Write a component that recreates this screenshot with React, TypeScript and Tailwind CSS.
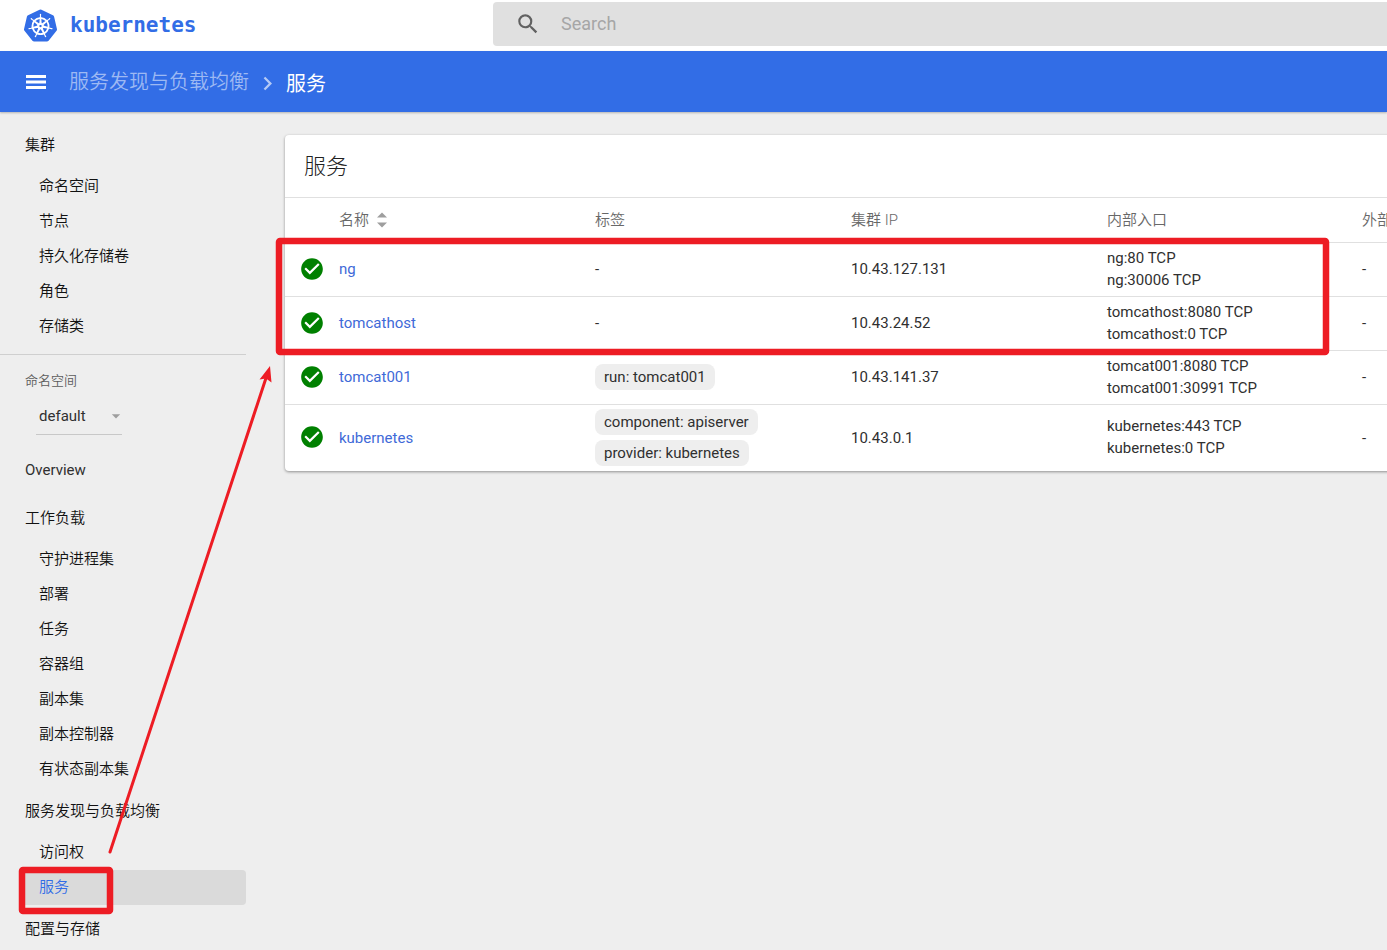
import { Fragment } from "react"
import { MdArrowDropDown, MdCheckCircle, MdChevronRight, MdSearch } from "react-icons/md"
import { SiKubernetes } from "react-icons/si"

const clusterItems = ["命名空间", "节点", "持久化存储卷", "角色", "存储类"]

const sections = [
  {
    title: "工作负载",
    items: ["守护进程集", "部署", "任务", "容器组", "副本集", "副本控制器", "有状态副本集"],
  },
  { title: "服务发现与负载均衡", items: ["访问权", "服务"] },
  { title: "配置与存储", items: [] },
]

const services = [
  { name: "ng", labels: [], ip: "10.43.127.131", endpoints: ["ng:80 TCP", "ng:30006 TCP"] },
  {
    name: "tomcathost",
    labels: [],
    ip: "10.43.24.52",
    endpoints: ["tomcathost:8080 TCP", "tomcathost:0 TCP"],
  },
  {
    name: "tomcat001",
    labels: ["run: tomcat001"],
    ip: "10.43.141.37",
    endpoints: ["tomcat001:8080 TCP", "tomcat001:30991 TCP"],
  },
  {
    name: "kubernetes",
    labels: ["component: apiserver", "provider: kubernetes"],
    ip: "10.43.0.1",
    endpoints: ["kubernetes:443 TCP", "kubernetes:0 TCP"],
  },
]

function Header() {
  return (
    <header className="flex h-[51px] shrink-0 bg-white">
      <div className="flex w-[493px] shrink-0 items-center pl-6">
        <a href="#" className="flex items-center gap-[13px] text-[#326de6]">
          <SiKubernetes className="size-[33px]" />
          <span className="font-['DejaVu_Sans_Mono',monospace] text-[21px] font-bold">kubernetes</span>
        </a>
      </div>
      <label className="mt-[2px] flex h-11 flex-1 items-center gap-5 rounded-l-sm bg-[#e0e0e0] pl-[22px]">
        <MdSearch className="size-[26px] text-[#616161]" />
        <input
          type="text"
          placeholder="Search"
          aria-label="Search"
          className="flex-1 bg-transparent text-lg outline-none placeholder:text-[#a6a6a6]"
        />
      </label>
    </header>
  )
}

function Toolbar() {
  return (
    <div className="z-10 flex h-[61px] shrink-0 items-center bg-[#326de6] pl-[26px] text-white shadow-[0_1px_2px_rgba(0,0,0,0.25)]">
      <button type="button" aria-label="菜单">
        <svg viewBox="0 0 20 14" className="h-[14px] w-5" fill="currentColor">
          <path d="M0 0H20V3H0ZM0 5.500H20V8.500H0ZM0 11H20V14H0Z" />
        </svg>
      </button>
      <nav className="ml-[23px] flex items-center text-xl">
        <a href="#" className="font-[350] text-[#9db9f3]">
          服务发现与负载均衡
        </a>
        <MdChevronRight className="mx-[5px] mt-1 size-[27px] text-[#b5caf6]" />
        <span className="mt-1">服务</span>
      </nav>
    </div>
  )
}

function NavHeading({ title }: { title: string }) {
  return (
    <a href="#" className="flex h-12 items-center pl-[25px]">
      {title}
    </a>
  )
}

function NavItem({ title, active }: { title: string; active?: boolean }) {
  return (
    <a
      href="#"
      className={
        active
          ? "ml-[22px] flex h-[35px] items-center rounded-sm bg-[#dadada] pl-[17px] text-[#326de6]"
          : "flex h-[35px] items-center pl-[39px]"
      }
    >
      {title}
    </a>
  )
}

function Sidebar() {
  return (
    <nav className="w-[246px] shrink-0 pt-[9px] text-[15px] font-[350] text-[#111111]">
      <NavHeading title="集群" />
      {clusterItems.map((item) => (
        <NavItem key={item} title={item} />
      ))}
      <div className="mt-[10px] h-[92px] border-t border-[#cfcfcf] pt-4">
        <label htmlFor="namespace" className="block pl-[25px] text-[13px] leading-5 text-[#5c5c5c]">
          命名空间
        </label>
        <div className="relative ml-9 mt-[7px] w-[86px]">
          <select
            id="namespace"
            className="h-[37px] w-full appearance-none border-b border-[#c8c8c8] bg-transparent pl-[3px] font-normal text-[#303030] outline-none"
          >
            <option>default</option>
          </select>
          <MdArrowDropDown className="pointer-events-none absolute -right-1 top-2 size-5 text-[#9e9e9e]" />
        </div>
      </div>
      <div className="font-normal text-[#303030]">
        <NavHeading title="Overview" />
      </div>
      {sections.map((section) => (
        <Fragment key={section.title}>
          <NavHeading title={section.title} />
          {section.items.map((item) => (
            <NavItem key={item} title={item} active={item === "服务"} />
          ))}
        </Fragment>
      ))}
    </nav>
  )
}

function ServiceTable() {
  return (
    <section className="min-w-[1334px] rounded-sm bg-white shadow-[0_1px_3px_rgba(0,0,0,0.4)]">
      <h2 className="flex h-[62px] items-center pl-[19px] text-[22px] font-light text-[#212121]">服务</h2>
      <table className="w-full table-fixed text-left text-[15px] text-[#303030]">
        <colgroup>
          <col className="w-[54px]" />
          <col className="w-[256px]" />
          <col className="w-[256px]" />
          <col className="w-[256px]" />
          <col className="w-[255px]" />
          <col />
        </colgroup>
        <thead>
          <tr className="h-[45px] border-t border-[#e0e0e0] text-[#686868] [&>th]:font-[350]">
            <th />
            <th>
              <button type="button" className="flex items-center gap-2">
                名称
                <svg viewBox="0 0 10 16" className="h-4 w-[10px]" fill="#9e9e9e">
                  <path d="M0 5.500L5 0.500L10 5.500Z" />
                  <path d="M0 10.500L5 15.500L10 10.500Z" />
                </svg>
              </button>
            </th>
            <th>标签</th>
            <th>集群 IP</th>
            <th>内部入口</th>
            <th className="whitespace-nowrap">外部入口</th>
          </tr>
        </thead>
        <tbody>
          {services.map((service) => (
            <tr key={service.name} className="h-[54px] border-t border-[#e0e0e0]">
              <td className="pb-[2px] pl-[14px]">
                <MdCheckCircle className="size-[26px] text-[#008000]" />
              </td>
              <td>
                <a href="#" className="text-[#3f6ad8]">
                  {service.name}
                </a>
              </td>
              <td>
                {service.labels.length === 0 ? (
                  "-"
                ) : (
                  <div className="flex flex-col items-start gap-[5px] pb-[5px] pt-1">
                    {service.labels.map((label) => (
                      <span key={label} className="h-[26px] rounded-lg bg-[#eeeeee] px-[9px] leading-[26px]">
                        {label}
                      </span>
                    ))}
                  </div>
                )}
              </td>
              <td>{service.ip}</td>
              <td className="pb-[2px] leading-[22px]">
                {service.endpoints.map((endpoint) => (
                  <div key={endpoint}>{endpoint}</div>
                ))}
              </td>
              <td>-</td>
            </tr>
          ))}
        </tbody>
      </table>
    </section>
  )
}

// Red marks drawn over the page
function Annotations() {
  return (
    <svg className="pointer-events-none absolute left-0 top-0 z-20 h-[950px] w-[1387px]" fill="none" stroke="#ed1c24">
      <rect x="279" y="241" width="1047" height="111" rx="1" strokeWidth="6.5" />
      <rect x="22" y="870" width="88" height="41" rx="1" strokeWidth="6.5" />
      <path d="M110 852L266 378" strokeWidth="3" strokeLinecap="round" />
      <path d="M270 366L271.500 382.500L266 378.500L259.500 379.500Z" fill="#ed1c24" stroke="none" />
    </svg>
  )
}

export default function App() {
  return (
    <div className="relative flex h-screen flex-col overflow-hidden bg-[#eeeeee] font-[Roboto,'Noto_Sans_CJK_SC',sans-serif]">
      <Header />
      <Toolbar />
      <div className="flex min-h-0 flex-1">
        <Sidebar />
        <main className="min-w-0 flex-1 pl-[39px] pt-[23px]">
          <ServiceTable />
        </main>
      </div>
      <Annotations />
    </div>
  )
}
